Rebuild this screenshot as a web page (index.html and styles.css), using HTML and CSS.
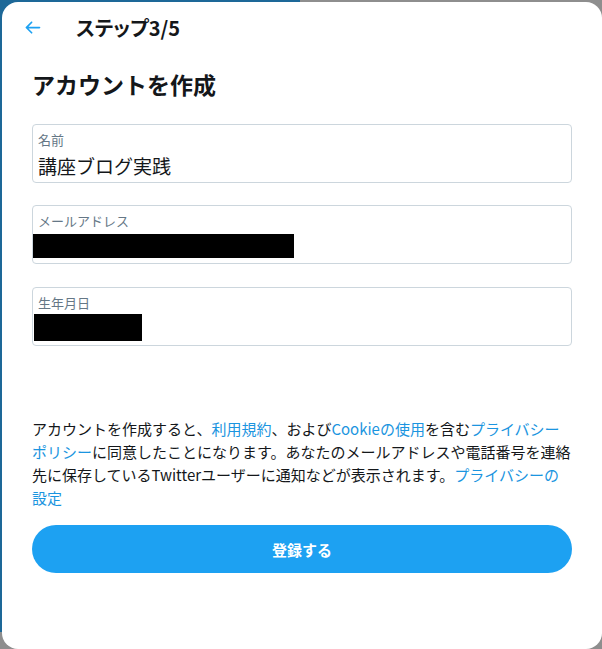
FILE: index.html
```html
<!DOCTYPE html>
<html lang="ja">
<head>
<meta charset="utf-8">
<link rel="stylesheet" href="styles.css">
</head>
<body>
<div class="backdrop"></div>
<div class="modal">
  <header class="header">
    <svg class="back" viewBox="0 0 24 24" aria-hidden="true"><path d="M20 11H7.414l4.293-4.293c.39-.39.39-1.023 0-1.414s-1.023-.39-1.414 0l-6 6c-.39.39-.39 1.023 0 1.414l6 6c.195.195.45.293.707.293s.512-.098.707-.293c.39-.39.39-1.023 0-1.414L7.414 13H20c.553 0 1-.447 1-1s-.447-1-1-1z"/></svg>
    <h2 class="step">ステップ3/5</h2>
  </header>
  <div class="body">
    <h1 class="title">アカウントを作成</h1>
    <div class="fields">
      <div class="field">
        <div class="label">名前</div>
        <div class="value">講座ブログ実践</div>
      </div>
      <div class="field">
        <div class="label">メールアドレス</div>
        <div class="value"><span class="redact redact-mail"></span></div>
      </div>
      <div class="field field-date">
        <div class="label">生年月日</div>
        <div class="value"><span class="redact redact-date"></span></div>
      </div>
    </div>
    <p class="terms">アカウントを作成すると、<a href="#">利用規約</a>、および<a href="#">Cookieの使用</a>を含む<a href="#">プライバシー<br>ポリシー</a>に同意したことになります。あなたのメールアドレスや電話番号を連絡<br>先に保存しているTwitterユーザーに通知などが表示されます。<a href="#">プライバシーの<br>設定</a></p>
    <button class="submit">登録する</button>
  </div>
</div>
</body>
</html>
```

FILE: styles.css
```css
* { box-sizing: border-box; }
html, body { margin: 0; padding: 0; }
body {
  width: 602px;
  height: 649px;
  overflow: hidden;
  background: #8e8e8e;
  font-family: "Noto Sans CJK JP", "Noto Sans", sans-serif;
  color: #14171a;
  position: relative;
  padding: 2px 0 0 2px;
}
.backdrop {
  position: absolute;
  left: 0;
  top: 0;
  width: 300px;
  height: 632px;
  background: #1d6898;
}
.modal {
  position: relative;
  width: 600px;
  height: 647px;
  background: #fff;
  border-radius: 16px;
}
.header {
  height: 51px;
  display: flex;
  align-items: center;
  padding-left: 20px;
}
.back {
  width: 21px;
  height: 21px;
  fill: #1da1f2;
  flex: none;
}
.step {
  margin: 0 0 0 33px;
  font-size: 20px;
  font-weight: 700;
  line-height: 24px;
  font-feature-settings: "palt";
}
.body {
  padding: 0 30px;
}
.title {
  margin: 17px 0 0;
  font-size: 23px;
  font-weight: 700;
  line-height: 28px;
}
.fields {
  margin-top: 26px;
  display: flex;
  flex-direction: column;
  gap: 22px;
}
.field {
  height: 59px;
  border: 1px solid #ccd6dd;
  border-radius: 4px;
  padding: 6px 5px 0;
}
.field-date {
  margin-top: 1px;
}
.label {
  font-size: 13px;
  line-height: 18px;
  color: #657786;
}
.value {
  font-size: 19px;
  line-height: 33px;
  height: 33px;
}
.redact {
  display: block;
  background: #000;
}
.redact-mail {
  width: 261px;
  height: 24px;
  margin: 4px 0 0 -5px;
}
.redact-date {
  width: 108px;
  height: 27px;
  margin: 2px 0 0 -4px;
}
.terms {
  margin: 71px 0 0;
  font-size: 15px;
  line-height: 23px;
  white-space: nowrap;
}
.terms a {
  color: #1b95e0;
  text-decoration: none;
}
.submit {
  display: block;
  width: 540px;
  height: 48px;
  margin-top: 16px;
  border: 0;
  border-radius: 24px;
  background: #1da1f2;
  color: #fff;
  font-family: inherit;
  font-size: 15px;
  font-weight: 700;
}
```
